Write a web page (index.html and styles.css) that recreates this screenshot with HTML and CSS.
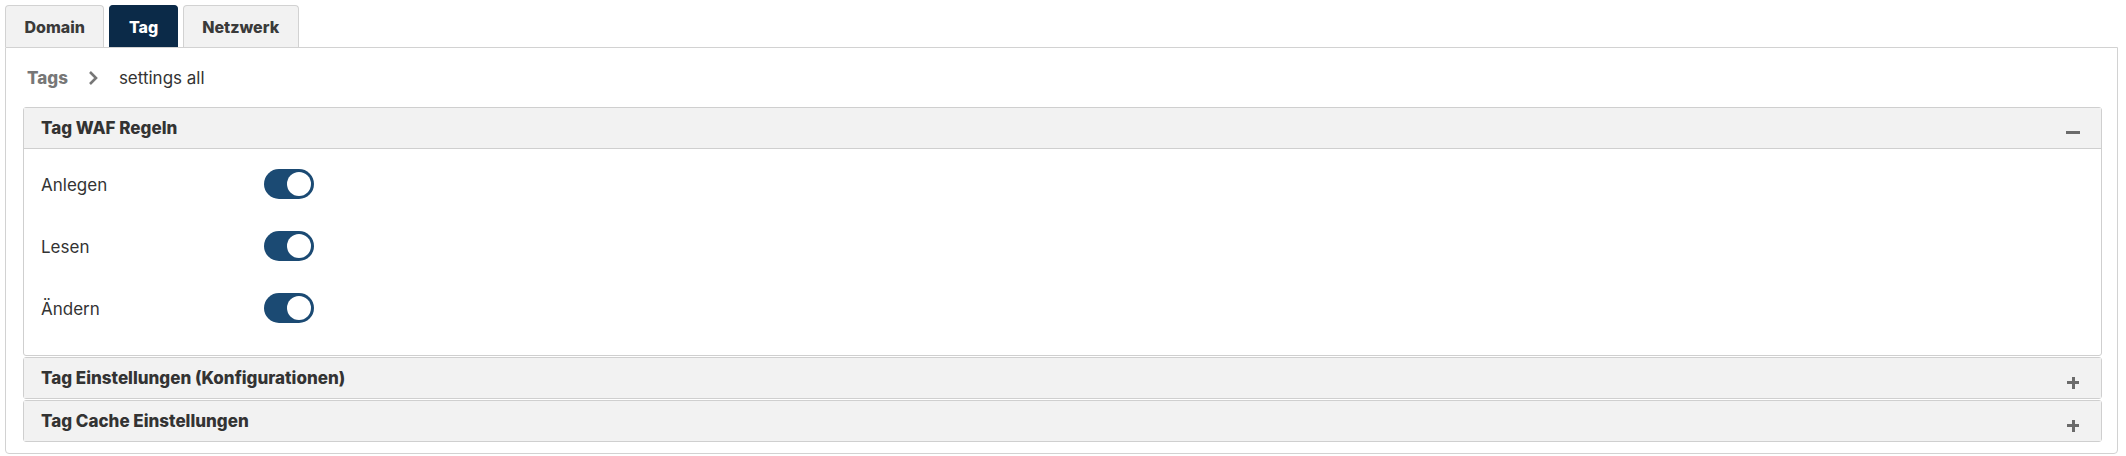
FILE: index.html
```html
<!DOCTYPE html>
<html lang="de">
<head>
<meta charset="utf-8">
<title>Tag</title>
<link rel="stylesheet" href="styles.css">
</head>
<body>
<div class="page">
  <div class="tabs">
    <div class="tab">Domain</div>
    <div class="tab active">Tag</div>
    <div class="tab">Netzwerk</div>
  </div>
  <div class="panel">
    <div class="breadcrumb">
      <span class="crumb-root">Tags</span>
      <svg class="chev" width="12" height="16" viewBox="0 0 12 16"><path d="M3 2 L9 8 L3 14" fill="none" stroke="#777" stroke-width="2.6"/></svg>
      <span class="crumb-current">settings all</span>
    </div>
    <div class="acc-item open">
      <div class="acc-header">
        <span class="acc-title">Tag WAF Regeln</span>
        <span class="acc-icon"><span class="minus"></span></span>
      </div>
      <div class="acc-body">
        <div class="row"><span class="label">Anlegen</span><span class="toggle"><span class="knob"></span></span></div>
        <div class="row"><span class="label">Lesen</span><span class="toggle"><span class="knob"></span></span></div>
        <div class="row"><span class="label">Ändern</span><span class="toggle"><span class="knob"></span></span></div>
      </div>
    </div>
    <div class="acc-item">
      <div class="acc-header">
        <span class="acc-title">Tag Einstellungen (Konfigurationen)</span>
        <span class="acc-icon"><span class="plus"></span></span>
      </div>
    </div>
    <div class="acc-item">
      <div class="acc-header">
        <span class="acc-title">Tag Cache Einstellungen</span>
        <span class="acc-icon"><span class="plus"></span></span>
      </div>
    </div>
  </div>
</div>
</body>
</html>
```
FILE: styles.css
```css
* { box-sizing: border-box; }
body {
  margin: 0;
  font-family: Inter, "Noto Sans", "Liberation Sans", sans-serif;
  color: #333;
  background: #fff;
}
.page {
  padding: 5px 8px 0 5px;
}
.tabs {
  display: flex;
  gap: 5px;
}
.tab {
  height: 42px;
  padding: 0 18.5px;
  display: flex;
  align-items: center;
  background: #f2f2f2;
  border: 1px solid #d2d2d2;
  border-bottom: none;
  border-radius: 4px 4px 0 0;
  font-size: 16px;
  font-weight: 800;
  color: #3a3a3a;
}
.tab.active {
  background: #0b2a48;
  border-color: #0b2a48;
  color: #fff;
}
.panel {
  border: 1px solid #d2d2d2;
  border-radius: 0 0 4px 4px;
  padding: 0 15px 10px 17px;
}
.breadcrumb {
  height: 59px;
  display: flex;
  align-items: center;
  padding-left: 4px;
  font-size: 17px;
}
.crumb-root {
  font-weight: 800;
  color: #777;
}
.chev {
  margin: 0 20px 0 19px;
}
.crumb-current {
  color: #333;
}
.acc-item {
  border: 1px solid #cfcfcf;
  border-radius: 3px;
  margin-bottom: 1px;
}
.acc-header {
  height: 40px;
  background: #f2f2f2;
  display: flex;
  align-items: center;
  justify-content: space-between;
  padding: 0 21px 0 17px;
}
.open .acc-header {
  border-bottom: 1px solid #cfcfcf;
  height: 41px;
}
.acc-title {
  font-size: 17px;
  font-weight: 800;
  color: #333;
}
.acc-icon {
  width: 14px;
  height: 14px;
  margin-top: 10px;
  position: relative;
}
.minus {
  position: absolute;
  left: 0;
  top: 5px;
  width: 14px;
  height: 3px;
  background: #6b6b6b;
}
.plus::before, .plus::after {
  content: "";
  position: absolute;
  background: #6b6b6b;
}
.plus::before {
  left: 1px;
  top: 5px;
  width: 12px;
  height: 3px;
}
.plus::after {
  left: 5.5px;
  top: 0.5px;
  width: 3px;
  height: 12px;
}
.acc-body {
  padding: 20px 17px 32px;
  display: flex;
  flex-direction: column;
  gap: 32px;
}
.row {
  display: flex;
  align-items: center;
  height: 30px;
}
.label {
  width: 223px;
  font-size: 17px;
  color: #333;
  padding-top: 2px;
}
.toggle {
  width: 50px;
  height: 30px;
  border-radius: 15px;
  background: #1b4a73;
  position: relative;
}
.knob {
  position: absolute;
  right: 3px;
  top: 3px;
  width: 24px;
  height: 24px;
  border-radius: 50%;
  background: #fff;
}
```
